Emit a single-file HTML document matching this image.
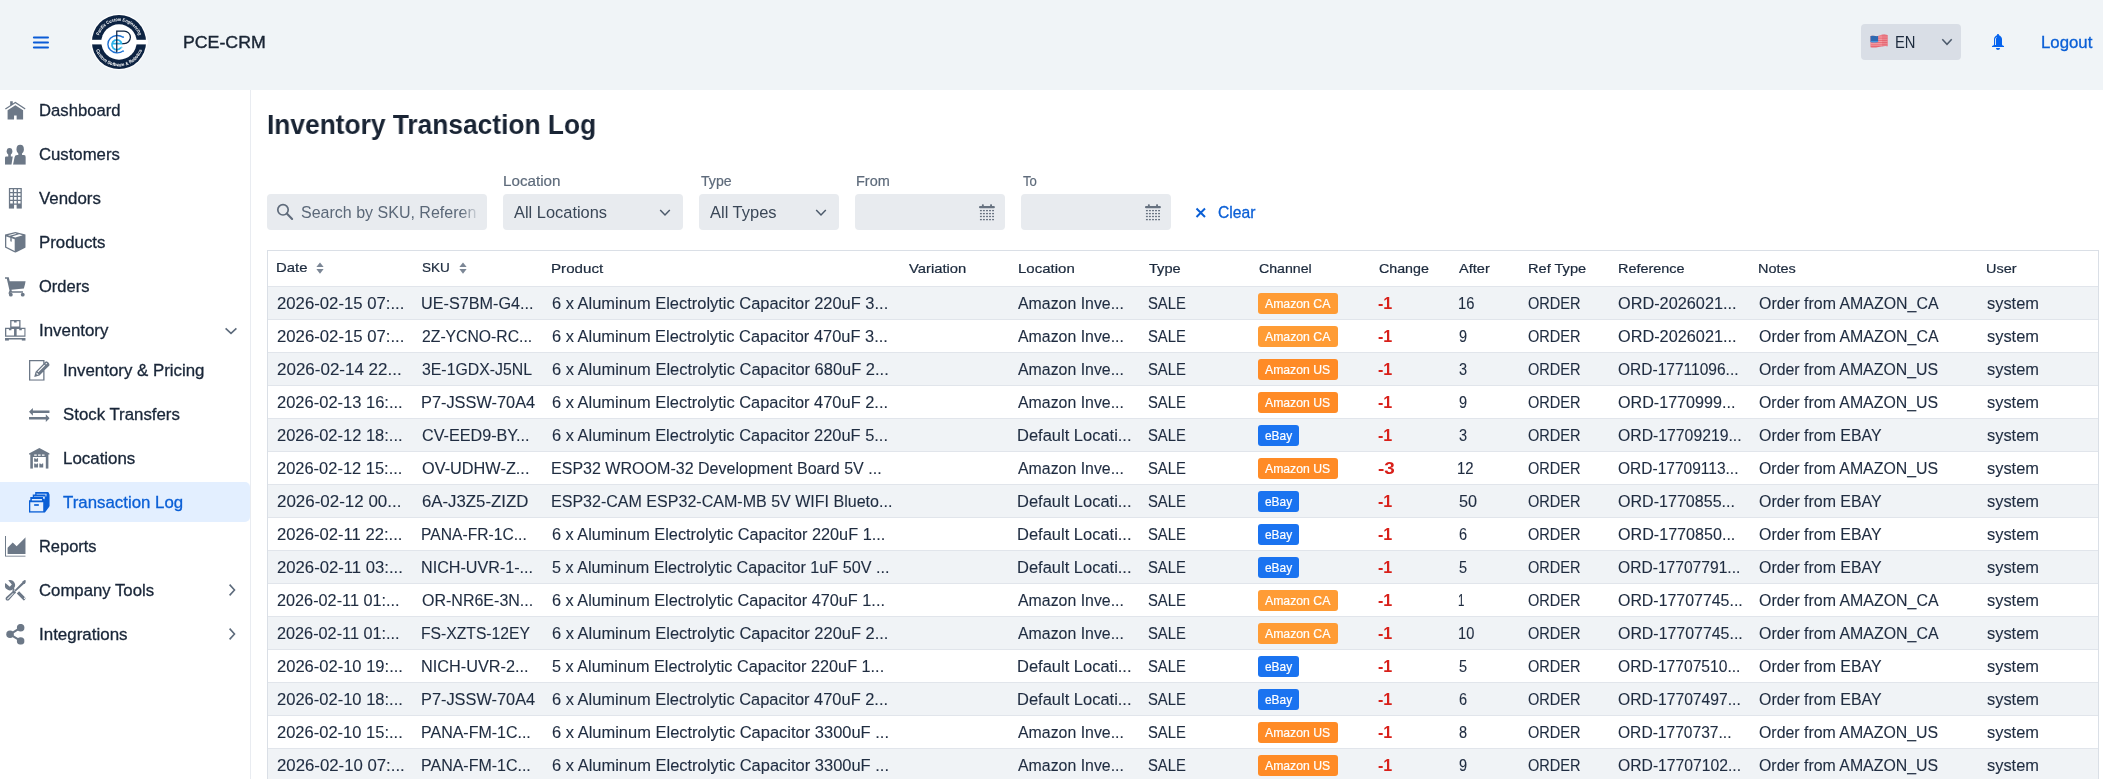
<!DOCTYPE html>
<html><head><meta charset="utf-8"><title>PCE-CRM</title>
<style>
*{box-sizing:border-box;margin:0;padding:0}
html,body{width:2103px;height:779px;overflow:hidden;background:#fff;font-family:"Liberation Sans",sans-serif;color:#1c2a3d;}
#all{position:absolute;left:0;top:0;width:2103px;height:779px;will-change:transform}
.abs{position:absolute}
.f{position:absolute;white-space:nowrap;transform-origin:0 50%}
#hdr{position:absolute;left:0;top:0;width:2103px;height:90px;background:#f0f4f7}
#side{position:absolute;left:0;top:90px;width:251px;height:689px;background:#fff;border-right:1px solid #e9ecf1}
.nav{position:absolute;left:0;width:250px;height:40px;font-size:16.15px;font-weight:400;color:#192638;white-space:nowrap}
.nav .t{position:absolute;top:0;line-height:40px;-webkit-text-stroke:0.3px #192638;transform-origin:0 50%}
.nav svg.ic{position:absolute;left:5px;top:10.1px;width:20.7px;height:20.7px;fill:#6c7887;color:#6c7887}
.nav.ch svg.ic{left:29px}
.nav.sel{background:#e3efff;border-radius:0 5px 5px 0;color:#0a5fd6}
.nav.sel .t{-webkit-text-stroke:0.3px #0a5fd6}
.nav.sel svg.ic{fill:#0a5fd6;color:#0a5fd6}
.nav svg.chev{position:absolute;left:221px;top:10px;width:20px;height:20px;fill:none;stroke:#5d6b7c;stroke-width:1.6}
h2{position:absolute;top:106.2px;font-size:28.2px;line-height:36px;font-weight:700;color:#192434;white-space:nowrap;transform-origin:0 50%}
.fld{position:absolute;top:194px;height:36px;background:#e8ebef;border-radius:4px}
.lbl{position:absolute;top:172.35px;font-size:14.15px;line-height:18px;color:#5e6b7b;white-space:nowrap;transform-origin:0 50%;-webkit-text-stroke:0.2px #5e6b7b}
.fld .v{position:absolute;top:0.4px;line-height:36px;font-size:16.15px;color:#3a4757;white-space:nowrap;transform-origin:0 50%}
#grid{position:absolute;left:267px;top:250px;width:1832px;height:540px;border:1px solid #dadfe6;border-bottom:none}
#ghead{position:absolute;left:0;top:0;width:1830px;height:35px;background:#fff}
.h{position:absolute;top:0.1px;line-height:35px;font-size:13.6px;font-weight:400;color:#1c2a3d;white-space:nowrap;-webkit-text-stroke:0.22px #1c2a3d;transform-origin:0 50%}
.h.s{top:-0.9px}
.row{position:absolute;left:268px;width:1830px;height:33px;border-top:1px solid #e1e5eb;background:#fff}
.row.odd{background:#f0f3f6}
.c{position:absolute;top:0;line-height:32px;font-size:16.15px;color:#1f2c40;-webkit-text-stroke:0.12px #1f2c40;white-space:nowrap;transform-origin:0 50%}
.c.chg{color:#d8201a;font-weight:700;-webkit-text-stroke:0}
.badge{position:absolute;top:6px;height:21px;border-radius:3px}
.bt{position:absolute;top:6px;line-height:21px;font-size:13.1px;color:#fff;white-space:nowrap;transform-origin:0 50%;-webkit-text-stroke:0.2px #fff}
.bca{background:#ff9c35}.bus{background:#ff8b26}.beb{background:#1a73f0}
</style></head><body>
<svg width="0" height="0" style="position:absolute">
<defs>
<symbol id="i-home" viewBox="0 0 16 16"><path d="M8 1.4l-2 1.3v-1.7h-2v3l-4 2.6 0.6 0.8 7.4-4.8 7.4 4.8 0.6-0.8z"/><path d="M8 4l-6 4v7h5v-3h2v3h5v-7z"/></symbol>
<symbol id="i-group" viewBox="0 0 16 16"><ellipse cx="3.5" cy="5.6" rx="2.2" ry="2.6"/><rect x="2.5" y="7.4" width="2" height="3"/><path d="M0 16V10.5Q0 9.6 0.9 9.6H6L5 16Z"/><ellipse cx="11.75" cy="4" rx="2.85" ry="3.45"/><rect x="10.3" y="6.5" width="2.9" height="3"/><path d="M6.2 16L7.4 10.2Q7.7 8.6 9.4 8.6H14.6Q16.2 8.6 16.2 10.2V16Z"/></symbol>
<symbol id="i-building" viewBox="0 0 16 16"><path fill-rule="evenodd" d="M3 0h10v16h-4v-3h-2v3h-4zM4 1v2h2v-2zM7 1v2h2v-2zM10 1v2h2v-2zM4 4v2h2v-2zM7 4v2h2v-2zM10 4v2h2v-2zM4 7v2h2v-2zM7 7v2h2v-2zM10 7v2h2v-2zM4 10v2h2v-2zM7 10v2h2v-2zM10 10v2h2v-2z"/></symbol>
<symbol id="i-package" viewBox="0 0 16 16"><path fill-rule="evenodd" d="M8 0L16 2V12L8 16L0 12V2ZM1 3.4V11.4L7.5 14.6V5.7ZM2.3 2.45L8 1.05L9.15 1.34L3.58 2.87ZM10.95 1.79L13.7 2.5L8 4.3L5.39 3.45Z"/><path d="M4.1 4.4L5.2 4.8V7.6L4.1 7.2Z"/></symbol>
<symbol id="i-cart" viewBox="0 0 16 16"><path d="M0 1h2.9l0.75 3h12.45l-1.5 5.7-9.6 0.9 0.3 1.1h8.6v1.2h-9.7l-0.6 1 -1-0.4 0.9-2.2-2.1-9.1h-1.4z"/><circle cx="4.5" cy="14.5" r="1.5"/><circle cx="13.7" cy="14.5" r="1.5"/></symbol>
<symbol id="i-stock" viewBox="0 0 16 16"><path fill-rule="evenodd" d="M4 0h8v6h-8zM5 1v4h6v-4h-2v1h-2v-1zM0 6h8v7h-8zM1 7v5h6v-5h-2v1h-2v-1zM8 6h8v7h-8zM9 7v5h6v-5h-2v1h-2v-1zM0 14h16v2h-3v-1h-10v1h-3z"/></symbol>
<symbol id="i-edit" viewBox="0 0 16 16"><path d="M16 4c0 0 0-1-1-2s-1.9-1-1.9-1l-1.1 1.1v-2.1h-12v16h12v-8l4-4zM6.3 11.4l-0.6-0.6 0.3-1.1 1.5 1.5-1.2 0.2zM7.2 9.5l-0.6-0.6 5.2-5.2c0.2 0.1 0.4 0.3 0.6 0.5l-5.2 5.3zM14.1 2.5l-0.9 1c-0.2-0.2-0.4-0.3-0.6-0.5l0.9-0.9c0.1 0.1 0.3 0.2 0.6 0.4zM11 15h-10v-14h10v2.1l-5.900 5.900-1.100 4.100 4.100-1.100 2.900-3v6z"/></symbol>
<symbol id="i-exchange" viewBox="0 0 16 16"><path d="M16 5v2h-13v2l-3-3 3-3v2z"/><path d="M0 12v-2h13v-2l3 3-3 3v-2z"/></symbol>
<symbol id="i-storage" viewBox="0 0 16 16"><path fill-rule="evenodd" d="M8 0L16 4.3V5H15V16H13V7H3V16H1V5H0V4.3ZM4 5v1h2v-1zM7 5v1h2v-1zM10 5v1h2v-1z"/><path d="M4 8h0.8l0.7 0.8 0.7-0.8h0.8v2.6h-3zM4 12h0.8l0.7 0.8 0.7-0.8h0.8v3h-3zM8 12h0.8l0.7 0.8 0.7-0.8h0.8v3h-3z"/></symbol>
<symbol id="i-records" viewBox="0 0 16 16"><path fill-rule="evenodd" d="M4.8 0H14.9L16.1 2.2V10.8L12.2 16H0V6.4H1V3.8H2.9V2H4.8ZM1 8V14.8H11V8ZM2.2 5.4V6.5H10V5.4ZM3.9 3.5V3.9H10.9V5.3H12.1V6.4H12.2V3.5ZM5.8 1.4V2H12.8V3.4H13.4L13.6 1.4Z"/><rect x="4" y="9.4" width="3.6" height="1.3"/></symbol>
<symbol id="i-chart" viewBox="0 0 16 16"><path d="M0 0h0.75v15.25h15.25v0.75h-16z"/><path d="M2 9l4-4 3 3 7-7v13h-14z"/></symbol>
<symbol id="i-tools" viewBox="0 0 16 16"><path d="M3.9 0A3.9 3.9 0 0 1 6.9 6.4L7.6 7.1L6.6 8.1L5.9 7.4A3.9 3.9 0 0 1 0.3 2.4L3.7 5.2L5.3 3.4L2.5 0.25A3.9 3.9 0 0 1 3.9 0Z"/><path d="M10.9 8.7L16.4 14.2L14.6 16L9.1 10.5ZM14.6 14.1a0.6 0.6 0 1 0 1.2 0a0.6 0.6 0 1 0 -1.2 0Z" fill-rule="evenodd"/><path d="M16.2 0.2L16.6 1.2L15.2 3L14.6 3L8 9L7.2 8.2L13.4 1.8L13.4 1.2L15.2 0Z"/><path fill-rule="evenodd" d="M6.2 8.6L7.8 10.2L3 15.6Q2 16.4 1 15.6T0.8 13.4ZM6.3 10.1L1.8 14.3Q1.5 14.9 2.1 15L6.6 10.5Z"/><path d="M6.3 7.6L8.6 9.7L7.6 10.6L5.5 8.5Z"/></symbol>
<symbol id="i-connect" viewBox="0 0 16 16"><circle cx="3.9" cy="8" r="2.9"/><circle cx="12.1" cy="2.85" r="2.9"/><circle cx="12.1" cy="13.1" r="2.9"/><path d="M3.9 8L12.1 2.85M3.9 8L12.1 13.1" stroke="currentColor" stroke-width="1.6" fill="none"/></symbol>
</defs></svg>

<div id="all">
<div id="hdr">
  <svg class="abs" style="left:32px;top:34px" width="18" height="17" viewBox="0 0 18 17"><g fill="#0a5bd6"><rect x="0.9" y="2.5" width="16.1" height="2" rx="1"/><rect x="0.9" y="7.55" width="16.1" height="2" rx="1"/><rect x="0.9" y="12.6" width="16.1" height="2" rx="1"/></g></svg>
  <svg class="abs" style="left:88.9px;top:12px" width="60" height="60" viewBox="0 0 60 60">
<defs><path id="arcT" d="M9.1 30A20.9 20.9 0 0 1 50.9 30"/><path id="arcB" d="M5.6 30A24.4 24.4 0 0 0 54.4 30"/></defs>
<circle cx="30" cy="30" r="28.3" fill="#fff"/>
<circle cx="30" cy="30" r="27.1" fill="#0d2342"/>
<circle cx="30" cy="30" r="17.7" fill="#fff"/>
<rect x="1" y="27.8" width="58" height="4.6" fill="#fff"/>
<g font-family="Liberation Sans, sans-serif" font-weight="700" font-size="4.7" fill="#fff" text-anchor="middle">
<text><textPath href="#arcT" startOffset="50%" textLength="52" lengthAdjust="spacingAndGlyphs">Pacific Custom Engineering</textPath></text>
<text><textPath href="#arcB" startOffset="50%" textLength="60" lengthAdjust="spacingAndGlyphs">Custom Software &amp; Robotics</textPath></text>
</g>
<g fill="none">
<path d="M34.1 25.3A9.4 8.7 0 1 0 34.1 39" stroke="#1d6fd0" stroke-width="1.4"/>
<circle cx="34.2" cy="25.2" r="0.9" fill="#3d8ce0" stroke="none"/><circle cx="34.2" cy="39.1" r="0.9" fill="#3d8ce0" stroke="none"/>
<path d="M22.9 31.7H32.7A4.95 4.95 0 1 0 32 35.5" stroke="#2bb5ea" stroke-width="1.7"/>
<circle cx="32.6" cy="35.3" r="0.9" fill="#6fd0f2" stroke="none"/>
<path d="M27.75 40.3V19H35.1A6.3 6.3 0 0 1 35.1 31.6H33.3" stroke="#0d2342" stroke-width="1.25"/>
</g>
</svg>

  <div class="f" style="left:182.58px;transform:scaleX(1.0192);top:30.3px;font-size:17.4px;line-height:24px;color:#192434;-webkit-text-stroke:0.4px #192434">PCE-CRM</div>
  <div class="abs" style="left:1861px;top:24px;width:100px;height:36px;background:#d9dee6;border-radius:4px"></div>
  <svg class="abs" style="left:1870.2px;top:34.1px" width="19" height="14" viewBox="0 0 19 14">
<defs><clipPath id="fc"><path d="M0.5 2Q3 1.6 5.5 2.1T11.5 0.8Q14.5 0.3 17.6 0.9V12.2Q14.5 11.8 11.5 12.4T6 13.4Q3 13.7 0.5 13.3Z"/></clipPath></defs>
<g clip-path="url(#fc)"><rect width="19" height="14" fill="#ea6873"/>
<g fill="#f5aeb3"><rect y="1.7" width="19" height="0.8"/><rect y="3.5" width="19" height="0.8"/><rect y="5.3" width="19" height="0.8"/><rect y="7.1" width="19" height="0.8"/><rect y="8.9" width="19" height="0.8"/><rect y="10.7" width="19" height="0.8"/></g>
<rect x="12" y="0" width="7" height="14" fill="#d8505e" opacity="0.25"/>
<path d="M0 0H8.1V8.1Q4.5 8.6 0 8.1Z" fill="#2f6ab2"/><path d="M0 7.3H8.1V8.1Q4.5 8.7 0 8.1Z" fill="#4ea6ea"/></g>
</svg>

  <div class="f" style="left:1895.09px;transform:scaleX(0.915);top:24px;line-height:36px;font-size:16.15px;color:#1c2a3d">EN</div>
  <svg class="abs" style="left:1940px;top:36px" width="14" height="12" viewBox="0 0 14 12"><path d="M2.3 3.3 L7 8.3 L11.7 3.3" fill="none" stroke="#4c5a6b" stroke-width="1.5"/></svg>
  <svg class="abs" style="left:1990px;top:33.9px" width="16" height="16" viewBox="0 0 16 16"><path fill="#0563ee" fill-rule="evenodd" d="M12.7 11.4c-0.5-0.2-0.7-0.7-0.7-1.2v-5.2c0-1.6-1.6-3.2-3-3.700v-0.300c0-0.600-0.400-1-1-1s-1 0.400-1 1v0.300c-1.400 0.500-3 2.100-3 3.700v5.200c0 0.500-0.300 1-0.700 1.200l-1.300 0.600v1h12v-1l-1.300-0.600zM5 5.400v5.600h0.900v-5.600c0-0.900 0.300-1.300 0.900-1.300v-0.900c-0.600 0-1.800 1.200-1.800 2.200zM8 16c1.100 0 2-0.900 2-2h-4c0 1.100 0.900 2 2 2z"/></svg>

  <div class="f" style="left:2040.96px;transform:scaleX(1.0392);top:30px;font-size:16.15px;line-height:24px;color:#0a5fd6;-webkit-text-stroke:0.3px #0a5fd6">Logout</div>
</div>
<div id="side">
<div class="nav" style="top:0px"><svg class="ic"><use href="#i-home"/></svg><span class="t" style="left:38.84px;transform:scaleX(1.0339)">Dashboard</span></div>
<div class="nav" style="top:44px"><svg class="ic"><use href="#i-group"/></svg><span class="t" style="left:38.9px;transform:scaleX(1.0357)">Customers</span></div>
<div class="nav" style="top:88px"><svg class="ic"><use href="#i-building"/></svg><span class="t" style="left:38.9px;transform:scaleX(1.0434)">Vendors</span></div>
<div class="nav" style="top:132px"><svg class="ic"><use href="#i-package"/></svg><span class="t" style="left:38.83px;transform:scaleX(1.0421)">Products</span></div>
<div class="nav" style="top:176px"><svg class="ic"><use href="#i-cart"/></svg><span class="t" style="left:38.9px;transform:scaleX(1.0229)">Orders</span></div>
<div class="nav" style="top:220px"><svg class="ic"><use href="#i-stock"/></svg><span class="t" style="left:38.83px;transform:scaleX(1.0454)">Inventory</span><svg class="chev" viewBox="0 0 20 20"><path d="M4.6 8.4L10 13.3L15.4 8.4"/></svg></div>
<div class="nav ch" style="top:260px"><svg class="ic"><use href="#i-edit"/></svg><span class="t" style="left:62.83px;transform:scaleX(1.0441)">Inventory &amp; Pricing</span></div>
<div class="nav ch" style="top:304px"><svg class="ic"><use href="#i-exchange"/></svg><span class="t" style="left:62.9px;transform:scaleX(1.042)">Stock Transfers</span></div>
<div class="nav ch" style="top:348px"><svg class="ic"><use href="#i-storage"/></svg><span class="t" style="left:62.83px;transform:scaleX(1.0467)">Locations</span></div>
<div class="nav ch sel" style="top:392px"><svg class="ic"><use href="#i-records"/></svg><span class="t" style="left:62.9px;transform:scaleX(1.0434)">Transaction Log</span></div>
<div class="nav" style="top:436px"><svg class="ic"><use href="#i-chart"/></svg><span class="t" style="left:38.86px;transform:scaleX(1.0186)">Reports</span></div>
<div class="nav" style="top:480px"><svg class="ic"><use href="#i-tools"/></svg><span class="t" style="left:38.9px;transform:scaleX(1.0372)">Company Tools</span><svg class="chev" viewBox="0 0 20 20"><path d="M8.6 4.6L13.5 10L8.6 15.4"/></svg></div>
<div class="nav" style="top:524px"><svg class="ic"><use href="#i-connect"/></svg><span class="t" style="left:38.83px;transform:scaleX(1.0496)">Integrations</span><svg class="chev" viewBox="0 0 20 20"><path d="M8.6 4.6L13.5 10L8.6 15.4"/></svg></div>
</div>
<h2 style="left:266.57px;transform:scaleX(0.9338)">Inventory Transaction Log</h2>
<div class="fld" style="left:267px;width:220px"><svg class="abs" style="left:8px;top:8px" width="20" height="20" viewBox="0 0 20 20"><circle cx="8" cy="7.8" r="5.2" fill="none" stroke="#5f6b7b" stroke-width="1.7"/><path d="M11.8 11.6L17.1 16.9" stroke="#5f6b7b" stroke-width="2.1" stroke-linecap="round"/></svg><span class="v" style="left:33.7px;transform:scaleX(0.9921);color:#5b6878;-webkit-mask-image:linear-gradient(90deg,#000 91%,transparent 102%);mask-image:linear-gradient(90deg,#000 91%,transparent 102%)">Search by SKU, Referen</span></div>
<div class="lbl" style="left:503.42px;transform:scaleX(1.0756)">Location</div>
<div class="fld" style="left:503px;width:180px"><span class="v" style="left:11.0px;transform:scaleX(1.017)">All Locations</span><svg class="abs" style="left:155px;top:12px" width="14" height="12" viewBox="0 0 14 12"><path d="M2.2 4 L7 8.9 L11.8 4" fill="none" stroke="#4c5a6b" stroke-width="1.5"/></svg></div>
<div class="lbl" style="left:700.75px;transform:scaleX(0.9986)">Type</div>
<div class="fld" style="left:699px;width:140px"><span class="v" style="left:10.5px;transform:scaleX(1.0204)">All Types</span><svg class="abs" style="left:114.8px;top:12px" width="14" height="12" viewBox="0 0 14 12"><path d="M2.2 4 L7 8.9 L11.8 4" fill="none" stroke="#4c5a6b" stroke-width="1.5"/></svg></div>
<div class="lbl" style="left:856.28px;transform:scaleX(1.0237)">From</div>
<div class="fld" style="left:855px;width:150px"><svg class="abs" style="left:124px;top:10px" width="16" height="17" viewBox="0 0 16 17"><g fill="#677280"><rect x="0" y="1.9" width="15.9" height="2.4" rx="1.1"/><rect x="2.9" y="0.3" width="1.9" height="2" rx="0.6"/><rect x="11.1" y="0.3" width="1.9" height="2" rx="0.6"/><rect x="0.95" y="5.95" width="1.9" height="1.3"/><rect x="0.95" y="8.95" width="1.9" height="1.3"/><rect x="0.95" y="11.85" width="1.9" height="1.3"/><rect x="0.95" y="14.95" width="1.9" height="1.3"/><rect x="3.95" y="5.95" width="1.9" height="1.3"/><rect x="3.95" y="8.95" width="1.9" height="1.3"/><rect x="3.95" y="11.85" width="1.9" height="1.3"/><rect x="3.95" y="14.95" width="1.9" height="1.3"/><rect x="7.05" y="5.95" width="1.9" height="1.3"/><rect x="7.05" y="8.95" width="1.9" height="1.3"/><rect x="7.05" y="11.85" width="1.9" height="1.3"/><rect x="7.05" y="14.95" width="1.9" height="1.3"/><rect x="10.05" y="5.95" width="1.9" height="1.3"/><rect x="10.05" y="8.95" width="1.9" height="1.3"/><rect x="10.05" y="11.85" width="1.9" height="1.3"/><rect x="10.05" y="14.95" width="1.9" height="1.3"/><rect x="13.10" y="5.95" width="1.9" height="1.3"/><rect x="13.10" y="8.95" width="1.9" height="1.3"/><rect x="13.10" y="11.85" width="1.9" height="1.3"/><rect x="13.10" y="14.95" width="1.9" height="1.3"/></g></svg></div>
<div class="lbl" style="left:1023.0px;transform:scaleX(0.929)">To</div>
<div class="fld" style="left:1021px;width:150px"><svg class="abs" style="left:124px;top:10px" width="16" height="17" viewBox="0 0 16 17"><g fill="#677280"><rect x="0" y="1.9" width="15.9" height="2.4" rx="1.1"/><rect x="2.9" y="0.3" width="1.9" height="2" rx="0.6"/><rect x="11.1" y="0.3" width="1.9" height="2" rx="0.6"/><rect x="0.95" y="5.95" width="1.9" height="1.3"/><rect x="0.95" y="8.95" width="1.9" height="1.3"/><rect x="0.95" y="11.85" width="1.9" height="1.3"/><rect x="0.95" y="14.95" width="1.9" height="1.3"/><rect x="3.95" y="5.95" width="1.9" height="1.3"/><rect x="3.95" y="8.95" width="1.9" height="1.3"/><rect x="3.95" y="11.85" width="1.9" height="1.3"/><rect x="3.95" y="14.95" width="1.9" height="1.3"/><rect x="7.05" y="5.95" width="1.9" height="1.3"/><rect x="7.05" y="8.95" width="1.9" height="1.3"/><rect x="7.05" y="11.85" width="1.9" height="1.3"/><rect x="7.05" y="14.95" width="1.9" height="1.3"/><rect x="10.05" y="5.95" width="1.9" height="1.3"/><rect x="10.05" y="8.95" width="1.9" height="1.3"/><rect x="10.05" y="11.85" width="1.9" height="1.3"/><rect x="10.05" y="14.95" width="1.9" height="1.3"/><rect x="13.10" y="5.95" width="1.9" height="1.3"/><rect x="13.10" y="8.95" width="1.9" height="1.3"/><rect x="13.10" y="11.85" width="1.9" height="1.3"/><rect x="13.10" y="14.95" width="1.9" height="1.3"/></g></svg></div>
<svg class="abs" style="left:1195px;top:206.5px" width="12" height="12" viewBox="0 0 12 12"><path d="M1.5 1.5 L10 10 M10 1.5 L1.5 10" stroke="#0a5fd6" stroke-width="2" fill="none"/></svg>
<div class="f" style="left:1217.5px;transform:scaleX(0.9695);top:200.4px;font-size:16.15px;line-height:24px;color:#0a5fd6;-webkit-text-stroke:0.3px #0a5fd6">Clear</div>
<div id="grid"><div id="ghead"><span class="h s" style="left:7.71px;transform:scaleX(1.0938)">Date</span><span class="h s" style="left:153.8px;transform:scaleX(0.9951)">SKU</span><span class="h" style="left:282.69px;transform:scaleX(1.1135)">Product</span><span class="h" style="left:640.8px;transform:scaleX(1.0887)">Variation</span><span class="h" style="left:749.7px;transform:scaleX(1.1037)">Location</span><span class="h" style="left:880.5px;transform:scaleX(1.0723)">Type</span><span class="h" style="left:990.8px;transform:scaleX(1.0411)">Channel</span><span class="h" style="left:1110.8px;transform:scaleX(1.0476)">Change</span><span class="h" style="left:1190.8px;transform:scaleX(1.0726)">After</span><span class="h" style="left:1259.73px;transform:scaleX(1.073)">Ref Type</span><span class="h" style="left:1350.14px;transform:scaleX(1.0612)">Reference</span><span class="h" style="left:1489.93px;transform:scaleX(1.0658)">Notes</span><span class="h" style="left:1717.94px;transform:scaleX(1.0648)">User</span><svg class="abs" style="left:46.65px;top:10px" width="10" height="14" viewBox="0 0 10 14"><path fill="#7c8796" d="M1.35 5.95H8.65L5 1.45ZM1.35 8.05H8.65L5 12.65Z"/></svg><svg class="abs" style="left:189.85px;top:10px" width="10" height="14" viewBox="0 0 10 14"><path fill="#7c8796" d="M1.35 5.95H8.65L5 1.45ZM1.35 8.05H8.65L5 12.65Z"/></svg></div></div>
<div class="row odd" style="top:286px"><span class="c" style="left:8.7px;transform:scaleX(1.0362)">2026-02-15 07:...</span><span class="c" style="left:152.6px;transform:scaleX(1.0036)">UE-S7BM-G4...</span><span class="c" style="left:283.5px;transform:scaleX(1.0184)">6 x Aluminum Electrolytic Capacitor 220uF 3...</span><span class="c" style="left:750.3px;transform:scaleX(0.9834)">Amazon Inve...</span><span class="c" style="left:880.2px;transform:scaleX(0.9168)">SALE</span><span class="c chg" style="left:1110.3px;transform:scaleX(0.9948)">-1</span><span class="c" style="left:1189.69px;transform:scaleX(0.913)">16</span><span class="c" style="left:1260.2px;transform:scaleX(0.9009)">ORDER</span><span class="c" style="left:1350.4px;transform:scaleX(1.0091)">ORD-2026021...</span><span class="c" style="left:1490.6px;transform:scaleX(0.9861)">Order from AMAZON_CA</span><span class="c" style="left:1718.6px;transform:scaleX(1.0169)">system</span><span class="badge bca" style="left:990px;width:80px"></span><span class="bt" style="left:997.0px;transform:scaleX(0.9354)">Amazon CA</span></div>
<div class="row" style="top:319px"><span class="c" style="left:8.7px;transform:scaleX(1.0362)">2026-02-15 07:...</span><span class="c" style="left:153.6px;transform:scaleX(0.9756)">2Z-YCNO-RC...</span><span class="c" style="left:283.5px;transform:scaleX(1.0173)">6 x Aluminum Electrolytic Capacitor 470uF 3...</span><span class="c" style="left:750.3px;transform:scaleX(0.9834)">Amazon Inve...</span><span class="c" style="left:880.2px;transform:scaleX(0.9168)">SALE</span><span class="c chg" style="left:1110.3px;transform:scaleX(0.9948)">-1</span><span class="c" style="left:1190.7px;transform:scaleX(0.9)">9</span><span class="c" style="left:1260.2px;transform:scaleX(0.9009)">ORDER</span><span class="c" style="left:1350.4px;transform:scaleX(1.0091)">ORD-2026021...</span><span class="c" style="left:1490.6px;transform:scaleX(0.9861)">Order from AMAZON_CA</span><span class="c" style="left:1718.6px;transform:scaleX(1.0169)">system</span><span class="badge bca" style="left:990px;width:80px"></span><span class="bt" style="left:997.0px;transform:scaleX(0.9354)">Amazon CA</span></div>
<div class="row odd" style="top:352px"><span class="c" style="left:8.7px;transform:scaleX(1.0525)">2026-02-14 22...</span><span class="c" style="left:153.6px;transform:scaleX(0.9813)">3E-1GDX-J5NL</span><span class="c" style="left:283.5px;transform:scaleX(1.02)">6 x Aluminum Electrolytic Capacitor 680uF 2...</span><span class="c" style="left:750.3px;transform:scaleX(0.9834)">Amazon Inve...</span><span class="c" style="left:880.2px;transform:scaleX(0.9168)">SALE</span><span class="c chg" style="left:1110.3px;transform:scaleX(0.9948)">-1</span><span class="c" style="left:1190.7px;transform:scaleX(0.9)">3</span><span class="c" style="left:1260.2px;transform:scaleX(0.9009)">ORDER</span><span class="c" style="left:1350.4px;transform:scaleX(0.962)">ORD-17711096...</span><span class="c" style="left:1490.6px;transform:scaleX(0.9837)">Order from AMAZON_US</span><span class="c" style="left:1718.6px;transform:scaleX(1.0169)">system</span><span class="badge bus" style="left:990px;width:80px"></span><span class="bt" style="left:997.0px;transform:scaleX(0.9326)">Amazon US</span></div>
<div class="row" style="top:385px"><span class="c" style="left:8.7px;transform:scaleX(1.0225)">2026-02-13 16:...</span><span class="c" style="left:152.59px;transform:scaleX(1.0129)">P7-JSSW-70A4</span><span class="c" style="left:283.5px;transform:scaleX(1.018)">6 x Aluminum Electrolytic Capacitor 470uF 2...</span><span class="c" style="left:750.3px;transform:scaleX(0.9834)">Amazon Inve...</span><span class="c" style="left:880.2px;transform:scaleX(0.9168)">SALE</span><span class="c chg" style="left:1110.3px;transform:scaleX(0.9948)">-1</span><span class="c" style="left:1190.7px;transform:scaleX(0.9)">9</span><span class="c" style="left:1260.2px;transform:scaleX(0.9009)">ORDER</span><span class="c" style="left:1350.4px;transform:scaleX(0.9988)">ORD-1770999...</span><span class="c" style="left:1490.6px;transform:scaleX(0.9837)">Order from AMAZON_US</span><span class="c" style="left:1718.6px;transform:scaleX(1.0169)">system</span><span class="badge bus" style="left:990px;width:80px"></span><span class="bt" style="left:997.0px;transform:scaleX(0.9326)">Amazon US</span></div>
<div class="row odd" style="top:418px"><span class="c" style="left:8.7px;transform:scaleX(1.0214)">2026-02-12 18:...</span><span class="c" style="left:153.6px;transform:scaleX(1.0017)">CV-EED9-BY...</span><span class="c" style="left:283.5px;transform:scaleX(1.0177)">6 x Aluminum Electrolytic Capacitor 220uF 5...</span><span class="c" style="left:749.28px;transform:scaleX(1.0212)">Default Locati...</span><span class="c" style="left:880.2px;transform:scaleX(0.9168)">SALE</span><span class="c chg" style="left:1110.3px;transform:scaleX(0.9948)">-1</span><span class="c" style="left:1190.7px;transform:scaleX(0.9)">3</span><span class="c" style="left:1260.2px;transform:scaleX(0.9009)">ORDER</span><span class="c" style="left:1350.4px;transform:scaleX(0.9773)">ORD-17709219...</span><span class="c" style="left:1490.6px;transform:scaleX(0.9859)">Order from EBAY</span><span class="c" style="left:1718.6px;transform:scaleX(1.0169)">system</span><span class="badge beb" style="left:990px;width:41px"></span><span class="bt" style="left:996.8px;transform:scaleX(0.9077)">eBay</span></div>
<div class="row" style="top:451px"><span class="c" style="left:8.7px;transform:scaleX(1.02)">2026-02-12 15:...</span><span class="c" style="left:153.6px;transform:scaleX(1.0095)">OV-UDHW-Z...</span><span class="c" style="left:282.51px;transform:scaleX(0.9934)">ESP32 WROOM-32 Development Board 5V ...</span><span class="c" style="left:750.3px;transform:scaleX(0.9834)">Amazon Inve...</span><span class="c" style="left:880.2px;transform:scaleX(0.9168)">SALE</span><span class="c chg" style="left:1110.4px;transform:scaleX(1.1687)">-3</span><span class="c" style="left:1189.28px;transform:scaleX(0.9248)">12</span><span class="c" style="left:1260.2px;transform:scaleX(0.9009)">ORDER</span><span class="c" style="left:1350.4px;transform:scaleX(0.9611)">ORD-17709113...</span><span class="c" style="left:1490.6px;transform:scaleX(0.9837)">Order from AMAZON_US</span><span class="c" style="left:1718.6px;transform:scaleX(1.0169)">system</span><span class="badge bus" style="left:990px;width:80px"></span><span class="bt" style="left:997.0px;transform:scaleX(0.9326)">Amazon US</span></div>
<div class="row odd" style="top:484px"><span class="c" style="left:8.7px;transform:scaleX(1.0499)">2026-02-12 00...</span><span class="c" style="left:153.6px;transform:scaleX(1.0396)">6A-J3Z5-ZIZD</span><span class="c" style="left:282.51px;transform:scaleX(0.9937)">ESP32-CAM ESP32-CAM-MB 5V WIFI Blueto...</span><span class="c" style="left:749.28px;transform:scaleX(1.0212)">Default Locati...</span><span class="c" style="left:880.2px;transform:scaleX(0.9168)">SALE</span><span class="c chg" style="left:1110.3px;transform:scaleX(0.9948)">-1</span><span class="c" style="left:1190.5px;transform:scaleX(1.0069)">50</span><span class="c" style="left:1260.2px;transform:scaleX(0.9009)">ORDER</span><span class="c" style="left:1350.4px;transform:scaleX(0.9951)">ORD-1770855...</span><span class="c" style="left:1490.6px;transform:scaleX(0.9859)">Order from EBAY</span><span class="c" style="left:1718.6px;transform:scaleX(1.0169)">system</span><span class="badge beb" style="left:990px;width:41px"></span><span class="bt" style="left:996.8px;transform:scaleX(0.9077)">eBay</span></div>
<div class="row" style="top:517px"><span class="c" style="left:8.7px;transform:scaleX(1.0303)">2026-02-11 22:...</span><span class="c" style="left:152.63px;transform:scaleX(0.969)">PANA-FR-1C...</span><span class="c" style="left:283.5px;transform:scaleX(1.0096)">6 x Aluminum Electrolytic Capacitor 220uF 1...</span><span class="c" style="left:749.28px;transform:scaleX(1.0212)">Default Locati...</span><span class="c" style="left:880.2px;transform:scaleX(0.9168)">SALE</span><span class="c chg" style="left:1110.3px;transform:scaleX(0.9948)">-1</span><span class="c" style="left:1190.7px;transform:scaleX(0.9)">6</span><span class="c" style="left:1260.2px;transform:scaleX(0.9009)">ORDER</span><span class="c" style="left:1350.4px;transform:scaleX(0.9984)">ORD-1770850...</span><span class="c" style="left:1490.6px;transform:scaleX(0.9859)">Order from EBAY</span><span class="c" style="left:1718.6px;transform:scaleX(1.0169)">system</span><span class="badge beb" style="left:990px;width:41px"></span><span class="bt" style="left:996.8px;transform:scaleX(0.9077)">eBay</span></div>
<div class="row odd" style="top:550px"><span class="c" style="left:8.7px;transform:scaleX(1.034)">2026-02-11 03:...</span><span class="c" style="left:152.6px;transform:scaleX(0.9997)">NICH-UVR-1-...</span><span class="c" style="left:283.5px;transform:scaleX(1.0034)">5 x Aluminum Electrolytic Capacitor 1uF 50V ...</span><span class="c" style="left:749.28px;transform:scaleX(1.0212)">Default Locati...</span><span class="c" style="left:880.2px;transform:scaleX(0.9168)">SALE</span><span class="c chg" style="left:1110.3px;transform:scaleX(0.9948)">-1</span><span class="c" style="left:1190.7px;transform:scaleX(0.9)">5</span><span class="c" style="left:1260.2px;transform:scaleX(0.9009)">ORDER</span><span class="c" style="left:1350.4px;transform:scaleX(0.967)">ORD-17707791...</span><span class="c" style="left:1490.6px;transform:scaleX(0.9859)">Order from EBAY</span><span class="c" style="left:1718.6px;transform:scaleX(1.0169)">system</span><span class="badge beb" style="left:990px;width:41px"></span><span class="bt" style="left:996.8px;transform:scaleX(0.9077)">eBay</span></div>
<div class="row" style="top:583px"><span class="c" style="left:8.7px;transform:scaleX(1.0068)">2026-02-11 01:...</span><span class="c" style="left:153.6px;transform:scaleX(0.9919)">OR-NR6E-3N...</span><span class="c" style="left:283.5px;transform:scaleX(1.0085)">6 x Aluminum Electrolytic Capacitor 470uF 1...</span><span class="c" style="left:750.3px;transform:scaleX(0.9834)">Amazon Inve...</span><span class="c" style="left:880.2px;transform:scaleX(0.9168)">SALE</span><span class="c chg" style="left:1110.3px;transform:scaleX(0.9948)">-1</span><span class="c" style="left:1190.29px;transform:scaleX(0.7125)">1</span><span class="c" style="left:1260.2px;transform:scaleX(0.9009)">ORDER</span><span class="c" style="left:1350.4px;transform:scaleX(0.986)">ORD-17707745...</span><span class="c" style="left:1490.6px;transform:scaleX(0.9861)">Order from AMAZON_CA</span><span class="c" style="left:1718.6px;transform:scaleX(1.0169)">system</span><span class="badge bca" style="left:990px;width:80px"></span><span class="bt" style="left:997.0px;transform:scaleX(0.9354)">Amazon CA</span></div>
<div class="row odd" style="top:616px"><span class="c" style="left:8.7px;transform:scaleX(1.0068)">2026-02-11 01:...</span><span class="c" style="left:152.63px;transform:scaleX(0.9719)">FS-XZTS-12EY</span><span class="c" style="left:283.5px;transform:scaleX(1.0191)">6 x Aluminum Electrolytic Capacitor 220uF 2...</span><span class="c" style="left:750.3px;transform:scaleX(0.9834)">Amazon Inve...</span><span class="c" style="left:880.2px;transform:scaleX(0.9168)">SALE</span><span class="c chg" style="left:1110.3px;transform:scaleX(0.9948)">-1</span><span class="c" style="left:1189.89px;transform:scaleX(0.9071)">10</span><span class="c" style="left:1260.2px;transform:scaleX(0.9009)">ORDER</span><span class="c" style="left:1350.4px;transform:scaleX(0.986)">ORD-17707745...</span><span class="c" style="left:1490.6px;transform:scaleX(0.9861)">Order from AMAZON_CA</span><span class="c" style="left:1718.6px;transform:scaleX(1.0169)">system</span><span class="badge bca" style="left:990px;width:80px"></span><span class="bt" style="left:997.0px;transform:scaleX(0.9354)">Amazon CA</span></div>
<div class="row" style="top:649px"><span class="c" style="left:8.7px;transform:scaleX(1.0242)">2026-02-10 19:...</span><span class="c" style="left:152.59px;transform:scaleX(1.0079)">NICH-UVR-2...</span><span class="c" style="left:283.5px;transform:scaleX(1.0061)">5 x Aluminum Electrolytic Capacitor 220uF 1...</span><span class="c" style="left:749.28px;transform:scaleX(1.0212)">Default Locati...</span><span class="c" style="left:880.2px;transform:scaleX(0.9168)">SALE</span><span class="c chg" style="left:1110.3px;transform:scaleX(0.9948)">-1</span><span class="c" style="left:1190.7px;transform:scaleX(0.9)">5</span><span class="c" style="left:1260.2px;transform:scaleX(0.9009)">ORDER</span><span class="c" style="left:1350.4px;transform:scaleX(0.968)">ORD-17707510...</span><span class="c" style="left:1490.6px;transform:scaleX(0.9859)">Order from EBAY</span><span class="c" style="left:1718.6px;transform:scaleX(1.0169)">system</span><span class="badge beb" style="left:990px;width:41px"></span><span class="bt" style="left:996.8px;transform:scaleX(0.9077)">eBay</span></div>
<div class="row odd" style="top:682px"><span class="c" style="left:8.7px;transform:scaleX(1.024)">2026-02-10 18:...</span><span class="c" style="left:152.59px;transform:scaleX(1.0129)">P7-JSSW-70A4</span><span class="c" style="left:283.5px;transform:scaleX(1.018)">6 x Aluminum Electrolytic Capacitor 470uF 2...</span><span class="c" style="left:749.28px;transform:scaleX(1.0212)">Default Locati...</span><span class="c" style="left:880.2px;transform:scaleX(0.9168)">SALE</span><span class="c chg" style="left:1110.3px;transform:scaleX(0.9948)">-1</span><span class="c" style="left:1190.7px;transform:scaleX(0.9)">6</span><span class="c" style="left:1260.2px;transform:scaleX(0.9009)">ORDER</span><span class="c" style="left:1350.4px;transform:scaleX(0.9703)">ORD-17707497...</span><span class="c" style="left:1490.6px;transform:scaleX(0.9859)">Order from EBAY</span><span class="c" style="left:1718.6px;transform:scaleX(1.0169)">system</span><span class="badge beb" style="left:990px;width:41px"></span><span class="bt" style="left:996.8px;transform:scaleX(0.9077)">eBay</span></div>
<div class="row" style="top:715px"><span class="c" style="left:8.7px;transform:scaleX(1.0227)">2026-02-10 15:...</span><span class="c" style="left:152.61px;transform:scaleX(0.9901)">PANA-FM-1C...</span><span class="c" style="left:283.5px;transform:scaleX(1.0208)">6 x Aluminum Electrolytic Capacitor 3300uF ...</span><span class="c" style="left:750.3px;transform:scaleX(0.9834)">Amazon Inve...</span><span class="c" style="left:880.2px;transform:scaleX(0.9168)">SALE</span><span class="c chg" style="left:1110.3px;transform:scaleX(0.9948)">-1</span><span class="c" style="left:1190.7px;transform:scaleX(0.9)">8</span><span class="c" style="left:1260.2px;transform:scaleX(0.9009)">ORDER</span><span class="c" style="left:1350.4px;transform:scaleX(0.9656)">ORD-1770737...</span><span class="c" style="left:1490.6px;transform:scaleX(0.9837)">Order from AMAZON_US</span><span class="c" style="left:1718.6px;transform:scaleX(1.0169)">system</span><span class="badge bus" style="left:990px;width:80px"></span><span class="bt" style="left:997.0px;transform:scaleX(0.9326)">Amazon US</span></div>
<div class="row odd" style="top:748px"><span class="c" style="left:8.7px;transform:scaleX(1.0391)">2026-02-10 07:...</span><span class="c" style="left:152.61px;transform:scaleX(0.9901)">PANA-FM-1C...</span><span class="c" style="left:283.5px;transform:scaleX(1.0208)">6 x Aluminum Electrolytic Capacitor 3300uF ...</span><span class="c" style="left:750.3px;transform:scaleX(0.9834)">Amazon Inve...</span><span class="c" style="left:880.2px;transform:scaleX(0.9168)">SALE</span><span class="c chg" style="left:1110.3px;transform:scaleX(0.9948)">-1</span><span class="c" style="left:1190.7px;transform:scaleX(0.9)">9</span><span class="c" style="left:1260.2px;transform:scaleX(0.9009)">ORDER</span><span class="c" style="left:1350.4px;transform:scaleX(0.9726)">ORD-17707102...</span><span class="c" style="left:1490.6px;transform:scaleX(0.9837)">Order from AMAZON_US</span><span class="c" style="left:1718.6px;transform:scaleX(1.0169)">system</span><span class="badge bus" style="left:990px;width:80px"></span><span class="bt" style="left:997.0px;transform:scaleX(0.9326)">Amazon US</span></div>
</div>
</body></html>
